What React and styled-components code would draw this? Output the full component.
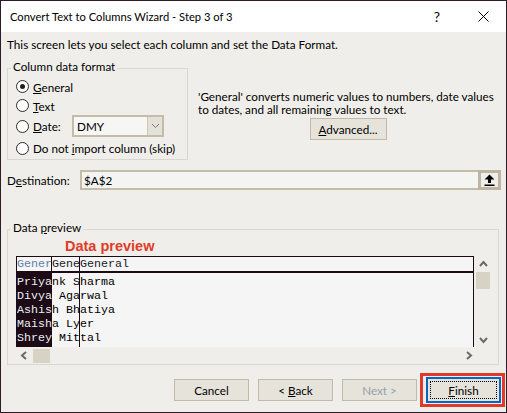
import React from 'react'
import styled, { createGlobalStyle } from 'styled-components'

const GlobalStyle = createGlobalStyle`
  html, body { margin: 0; padding: 0; }
  body {
    width: 507px;
    height: 413px;
    overflow: hidden;
    font-family: Lato, "Noto Sans", "Liberation Sans", sans-serif;
    font-size: 11.7px;
    color: #000;
  }
  * { box-sizing: border-box; }
`

const Window = styled.div`
  width: 507px;
  height: 413px;
  border: 1px solid #2e1c26;
  background: #efeeea;
  display: flex;
  flex-direction: column;
`

const TitleBar = styled.div`
  height: 31px;
  flex-shrink: 0;
  background: #fff;
  display: flex;
  align-items: center;
  padding-left: 9px;
`

const Title = styled.div`
  flex: 1;
  font-size: 11.2px;
`

const CaptionButton = styled.div`
  width: 46px;
  height: 31px;
  display: flex;
  align-items: center;
  justify-content: center;
  font-size: 14px;
`

const Body = styled.div`
  flex: 1;
  display: flex;
  flex-direction: column;
  padding: 4px 0 0 6px;
`

const Intro = styled.div`
  line-height: 16px;
  white-space: nowrap;
`

const TopSection = styled.div`
  display: flex;
  margin-top: 7px;
`

const Group = styled.fieldset`
  margin: 0;
  min-width: 0;
  border: 1px solid #d9d7cf;
  padding: 1px 0 0 3px;
  width: ${p => p.$width};
`

const Legend = styled.legend`
  padding: 0 2px 4px 2px;
  line-height: 14px;
`

const RadioRow = styled.div`
  display: flex;
  align-items: center;
  height: ${p => p.$h || 19}px;
  margin-top: ${p => p.$mt || 0}px;
  padding-left: 5px;
  white-space: nowrap;
`

const Radio = styled.span`
  width: 13px;
  height: 13px;
  border-radius: 50%;
  border: 1px solid #2b2b2b;
  background: #fff;
  margin-right: 4px;
  display: flex;
  align-items: center;
  justify-content: center;
  flex-shrink: 0;
  &::after {
    content: '';
    width: 5px;
    height: 5px;
    border-radius: 50%;
    background: ${p => (p.$checked ? '#1e1e1e' : 'transparent')};
  }
`

const DateLabel = styled.span`
  width: 39px;
`

const Select = styled.div`
  width: 92px;
  height: 22px;
  border: 2px solid #c4bcab;
  background: #f6f6f5;
  display: flex;
  align-items: center;
  padding-left: 3px;
`

const SelectText = styled.span`
  flex: 1;
`

const SelectArrow = styled.span`
  width: 15px;
  height: 18px;
  background: #e4e1d9;
  border-left: 1px solid #cfc8b9;
  display: flex;
  align-items: center;
  justify-content: center;
`

const Hint = styled.div`
  width: 300px;
  margin-left: 10px;
  padding-top: 31px;
  display: flex;
  flex-direction: column;
`

const HintLine = styled.div`
  height: 13px;
  line-height: 13px;
  white-space: nowrap;
`

const Button = styled.button`
  font-family: inherit;
  font-size: 11.7px;
  width: ${p => p.$w || 75}px;
  height: ${p => p.$h || 22}px;
  background: #e6e3db;
  border: 1px solid #c2b9a8;
  color: ${p => (p.$disabled ? '#97a1ab' : '#000')};
  padding: 0;
  display: flex;
  align-items: center;
  justify-content: center;
  align-self: ${p => p.$align || 'auto'};
  margin-top: ${p => p.$mt || 0}px;
`

const DefaultButton = styled(Button)`
  border: 2px solid #0a64c2;
  position: relative;
  &::before {
    content: '';
    position: absolute;
    inset: 2px;
    border: 1px dotted #000;
  }
`

const DestRow = styled.div`
  display: flex;
  align-items: center;
  margin-top: 10px;
  height: 20px;
`

const DestLabel = styled.span`
  width: 73px;
`

const DestField = styled.div`
  width: 421px;
  height: 20px;
  border: 2px solid #c4bcab;
  border-right: none;
  background: #f4f4f3;
  display: flex;
  align-items: center;
`

const DestText = styled.span`
  flex: 1;
  padding-left: 2px;
`

const RefButton = styled.span`
  width: 23px;
  height: 20px;
  margin-top: -2px;
  margin-bottom: -2px;
  border: 3px solid #bdb4a2;
  background: #efeeea;
  display: flex;
  align-items: center;
  justify-content: center;
`

const PreviewGroup = styled(Group)`
  margin-top: 30px;
  width: 492px;
`

const Annotation = styled.div`
  font-family: "Liberation Sans", Arial, sans-serif;
  font-weight: bold;
  font-size: 14.5px;
  line-height: 16px;
  color: #e03c28;
  margin: -1px 0 0 54px;
`

const PreviewGrid = styled.div`
  display: grid;
  grid-template-columns: 458px 17px;
  grid-template-rows: 91px 17px;
  margin: 2px 0 0 5px;
`

const Table = styled.div`
  border: 1px solid #1c0a14;
  border-bottom: none;
  background: #f5f5f5;
  font-family: "Liberation Mono", "Courier New", monospace;
  font-size: 11.67px;
  overflow: hidden;
  display: flex;
  flex-direction: column;
`

const colLines = `
  linear-gradient(to right,
    transparent 0 34px, #1c0a14 34px 35px,
    transparent 35px 62px, #1c0a14 62px 63px,
    transparent 63px)
`

const TableHead = styled.div`
  height: 16px;
  line-height: 15px;
  border-bottom: 2px solid #1c0a14;
  background: ${colLines};
  color: #1a1a2a;
  white-space: pre;
`

const TableBody = styled.div`
  flex: 1;
  padding-top: 2px;
  background:
    ${colLines},
    linear-gradient(to right, #1c0a14 0 35px, transparent 35px);
  white-space: pre;
`

const DataRow = styled.div`
  height: 14px;
  line-height: 14px;
`

const Selected = styled.span`
  color: ${p => (p.$head ? '#5e80ae' : '#e8eef8')};
`

const VScroll = styled.div`
  display: flex;
  flex-direction: column;
  align-items: center;
  padding: 4px 0 2px 1px;
`

const HScroll = styled.div`
  display: flex;
  align-items: center;
  padding: 0 0 0 4px;
`

const Thumb = styled.div`
  width: ${p => p.$w}px;
  height: ${p => p.$h}px;
  background: #d8d2c4;
  margin: ${p => p.$m || 0};
`

const Spacer = styled.div`
  flex: 1;
`

const Footer = styled.div`
  display: flex;
  justify-content: flex-end;
  align-items: center;
  gap: 9px;
  padding: 8px 1px 0 0;
`

const Highlight = styled.div`
  border: 3px solid #e03a2a;
  padding: 1px 1px 1px 3px;
  margin-left: -6px;
`

const Key = styled.u`
  text-underline-offset: 1px;
`

const Chevron = ({ dir }) => {
  const pts = {
    up: '1,6 4.5,2 8,6',
    down: '1,2 4.5,6 8,2',
    left: '6,1 2,4.5 6,8',
    right: '2,1 6,4.5 2,8',
  }[dir]
  return (
    <svg width="9" height="9" viewBox="0 0 9 9">
      <polyline points={pts} fill="none" stroke="#6a6a6a" strokeWidth="2" />
    </svg>
  )
}

const rows = ['Priyank Sharma', 'Divya Agarwal', 'Ashish Bhatiya', 'Maisha Lyer', 'Shrey Mittal']

export default function App() {
  return (
    <>
      <GlobalStyle />
      <Window>
        <TitleBar>
          <Title>Convert Text to Columns Wizard - Step 3 of 3</Title>
          <CaptionButton>?</CaptionButton>
          <CaptionButton>
            <svg width="11" height="11" viewBox="0 0 11 11">
              <path d="M0.5 0.5 L10.5 10.5 M10.5 0.5 L0.5 10.5" stroke="#000" strokeWidth="1" />
            </svg>
          </CaptionButton>
        </TitleBar>
        <Body>
          <Intro>This screen lets you select each column and set the Data Format.</Intro>
          <TopSection>
            <Group $width="181px">
              <Legend>Column data format</Legend>
              <RadioRow $mt={-1}>
                <Radio $checked />
                <span><Key>G</Key>eneral</span>
              </RadioRow>
              <RadioRow>
                <Radio />
                <span><Key>T</Key>ext</span>
              </RadioRow>
              <RadioRow $h={22}>
                <Radio />
                <DateLabel><Key>D</Key>ate:</DateLabel>
                <Select>
                  <SelectText>DMY</SelectText>
                  <SelectArrow>
                    <svg width="9" height="6" viewBox="0 0 9 6">
                      <polyline points="1,1 4.5,4.5 8,1" fill="none" stroke="#777" strokeWidth="1" />
                    </svg>
                  </SelectArrow>
                </Select>
              </RadioRow>
              <RadioRow $h={22}>
                <Radio />
                <span>Do not <Key>i</Key>mport column (skip)</span>
              </RadioRow>
            </Group>
            <Hint>
              <HintLine>'General' converts numeric values to numbers, date values</HintLine>
              <HintLine>to dates, and all remaining values to text.</HintLine>
              <Button $w={77} $align="center" $mt={2}>
                <span><Key>A</Key>dvanced...</span>
              </Button>
            </Hint>
          </TopSection>
          <DestRow>
            <DestLabel>D<Key>e</Key>stination:</DestLabel>
            <DestField>
              <DestText>$A$2</DestText>
              <RefButton>
                <svg width="11" height="12" viewBox="0 0 11 12">
                  <path d="M5.5 0.5 L10.5 5.5 L7 5.5 L7 9 L4 9 L4 5.5 L0.5 5.5 Z" fill="#000" />
                  <rect x="0.5" y="10.5" width="10" height="1.5" fill="#000" />
                </svg>
              </RefButton>
            </DestField>
          </DestRow>
          <PreviewGroup>
            <Legend>Data <Key>p</Key>review</Legend>
            <Annotation>Data preview</Annotation>
            <PreviewGrid>
              <Table>
                <TableHead><Selected $head>Gener</Selected>GeneGeneral</TableHead>
                <TableBody>
                  {rows.map(r => (
                    <DataRow key={r}>
                      <Selected>{r.slice(0, 5)}</Selected>{r.slice(5)}
                    </DataRow>
                  ))}
                </TableBody>
              </Table>
              <VScroll>
                <Chevron dir="up" />
                <Thumb $w={14} $h={17} $m="3px 0 0 0" />
                <Spacer />
                <Chevron dir="down" />
              </VScroll>
              <HScroll>
                <Chevron dir="left" />
                <Thumb $w={17} $h={14} $m="0 0 0 4px" />
                <Spacer />
                <Chevron dir="right" />
              </HScroll>
            </PreviewGrid>
          </PreviewGroup>
          <Footer>
            <Button>Cancel</Button>
            <Button><span>&lt; <Key>B</Key>ack</span></Button>
            <Button $disabled>Next &gt;</Button>
            <Highlight>
              <DefaultButton $h={26}><span><Key>F</Key>inish</span></DefaultButton>
            </Highlight>
          </Footer>
        </Body>
      </Window>
    </>
  )
}
